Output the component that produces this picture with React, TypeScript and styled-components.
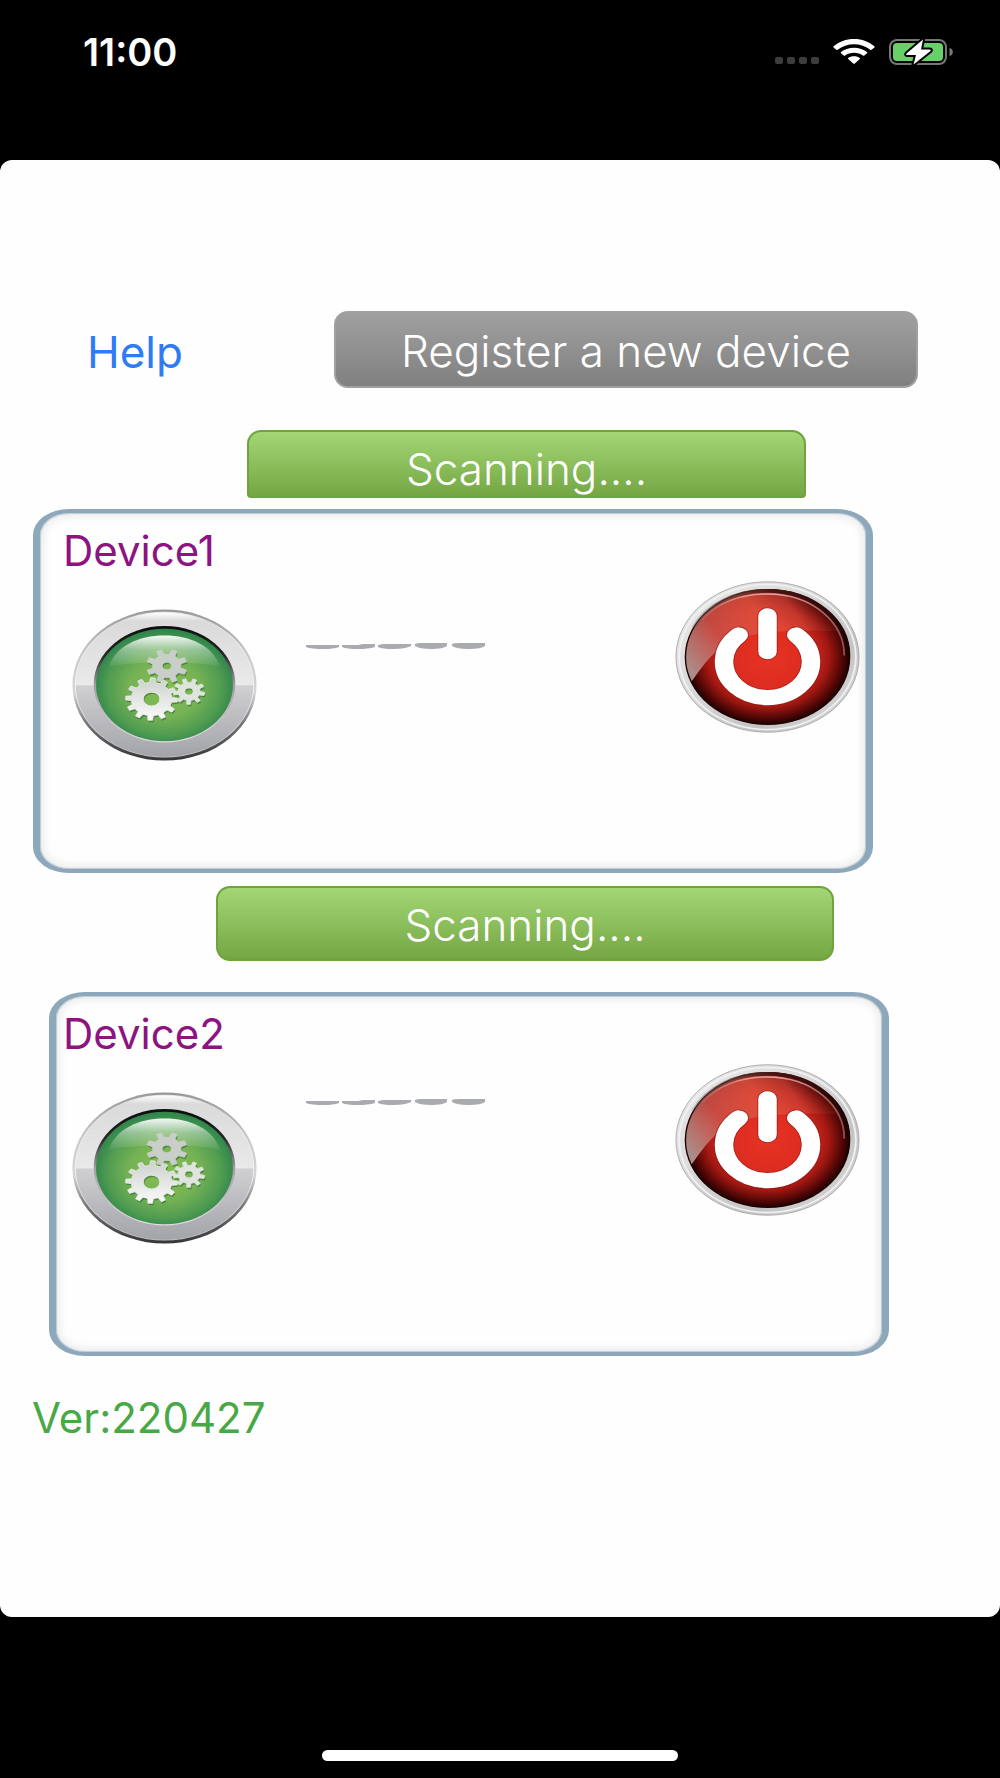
import React from "react";
import styled, { createGlobalStyle } from "styled-components";

const GlobalStyle = createGlobalStyle`
  *, *::before, *::after { box-sizing: border-box; }
  body { margin: 0; background: #000; }
  button { font: inherit; cursor: pointer; }
`;

const Screen = styled.div`
  display: flex;
  flex-direction: column;
  min-height: 100vh;
  background: #000;
  font-family: Inter, "Liberation Sans", sans-serif;
  font-size: 42px;
  line-height: 48px;
`;

const StatusBar = styled.header`
  display: flex;
  justify-content: space-between;
  height: 160px;
  padding: 32px 47px 0 83px;
`;

const Clock = styled.time`
  color: #fff;
  font-size: 38px;
  font-weight: 600;
  line-height: 40px;
`;

const StatusIcons = styled.div`
  display: flex;
  align-items: center;
  gap: 14px;
  height: 40px;
`;

const Sheet = styled.main`
  display: flex;
  flex: 1;
  flex-direction: column;
  padding: 151px 0 40px;
  border-radius: 12px;
  background: #fefefe;
`;

const Toolbar = styled.div`
  display: flex;
  align-items: center;
  padding: 0 82px 0 87px;
`;

const HelpLink = styled.a`
  flex: 0 0 247px;
  padding-top: 4px;
  color: #2f7bf6;
  font-size: 44px;
  text-decoration: none;
`;

const RegisterButton = styled.button`
  flex: 1;
  height: 77px;
  padding: 2px 0 0;
  border: 2px solid #a0a0a0;
  border-radius: 14px;
  background: linear-gradient(#a0a0a0, #808080);
  color: #fff;
  font-size: 44px;
  font-weight: 300;
`;

const ScanButton = styled.button<{ $clipped?: boolean }>`
  height: ${(p) => (p.$clipped ? 68 : 75)}px;
  margin: ${(p) => (p.$clipped ? "42px 194px 11px 247px" : "13px 166px 31px 216px")};
  padding: ${(p) => (p.$clipped ? "10px" : "2px")} 0 0;
  border: 2px solid #6fa43c;
  border-radius: ${(p) => (p.$clipped ? "14px 14px 4px 4px" : "14px")};
  background: linear-gradient(#a3d674, #74a644);
  color: #fff;
  font-size: 44px;
  font-weight: 300;
`;

const Card = styled.section<{ $indented?: boolean }>`
  display: flex;
  align-items: flex-start;
  height: 364px;
  margin: ${(p) => (p.$indented ? "0 111px 0 49px" : "0 127px 0 33px")};
  padding: ${(p) => (p.$indented ? "14px 22px 0 7px" : "14px 6px 0 23px")};
  border: solid #8ca8ba;
  border-width: 4px 7px;
  border-radius: 36px / 26px;
  box-shadow: inset 0 0 1px 1px #b9c9d4, inset 0 0 10px 3px #e9e9e9;
`;

const Identity = styled.div`
  display: flex;
  flex-direction: column;
  align-items: flex-start;
  gap: 34px;
  width: 243px;
`;

const DeviceName = styled.h2`
  margin: 0;
  color: #8c1380;
  font-size: 42px;
  font-weight: 400;
`;

const RoundButton = styled.button<{ $kind: "settings" | "power" }>`
  display: block;
  width: 185px;
  height: 152px;
  margin: ${(p) => (p.$kind === "settings" ? "0 0 0 9px" : "54px 0 0 auto")};
  padding: 0;
  border: 0;
  border-radius: 50%;
  background: none;

  svg { display: block; width: 100%; height: 100%; }
`;

const Reading = styled.div<{ $raised?: boolean }>`
  padding-top: ${(p) => (p.$raised ? 89 : 116)}px;

  svg { display: block; }
`;

const Version = styled.p`
  margin: 38px 0 0 32px;
  color: #48a846;
`;

const HomeArea = styled.footer`
  display: flex;
  align-items: flex-end;
  justify-content: center;
  height: 161px;
  padding-bottom: 17px;
`;

const HomeIndicator = styled.div`
  width: 356px;
  height: 11px;
  border-radius: 6px;
  background: #fff;
`;

/* Outline of a cog with evenly spaced, slightly tapered teeth. */
function cogPath(cx: number, cy: number, outer: number, inner: number, hole: number, teeth: number, turn = 0) {
  const step = (Math.PI * 2) / teeth;
  const at = (r: number, a: number) =>
    `${(cx + r * Math.cos(a)).toFixed(2)} ${(cy + r * Math.sin(a)).toFixed(2)}`;
  let d = "";
  for (let i = 0; i < teeth; i++) {
    const a = turn + i * step;
    d += `${i ? "L" : "M"}${at(inner, a - step * 0.27)}L${at(outer, a - step * 0.17)}`;
    d += `L${at(outer, a + step * 0.17)}L${at(inner, a + step * 0.27)}`;
  }
  return (
    d + `ZM${cx - hole} ${cy}a${hole} ${hole} 0 1 0 ${hole * 2} 0a${hole} ${hole} 0 1 0 ${-hole * 2} 0Z`
  );
}

function GearsArt({ id }: { id: string }) {
  const u = (n: string) => `url(#${id}-${n})`;
  return (
    <svg viewBox="0 0 200 200" preserveAspectRatio="none" aria-hidden="true">
      <defs>
        <linearGradient id={`${id}-edge`} x1="0" y1="0" x2="0" y2="1">
          <stop offset="0" stopColor="#98989c" />
          <stop offset=".3" stopColor="#c9c9cc" />
          <stop offset=".55" stopColor="#d5d5d7" />
          <stop offset=".75" stopColor="#77777a" />
          <stop offset="1" stopColor="#353537" />
        </linearGradient>
        <linearGradient id={`${id}-metal`} x1="0" y1="0" x2="0" y2="1">
          <stop offset="0" stopColor="#fff" />
          <stop offset=".06" stopColor="#dadadb" />
          <stop offset=".5" stopColor="#e9e9ea" />
          <stop offset=".51" stopColor="#d0d0d3" />
          <stop offset="1" stopColor="#a3a4a8" />
        </linearGradient>
        <linearGradient id={`${id}-rim`} x1="0" y1="0" x2="0" y2="1">
          <stop offset="0" stopColor="#0c0d0c" />
          <stop offset=".25" stopColor="#252525" />
          <stop offset=".5" stopColor="#a29ca0" />
          <stop offset="1" stopColor="#e2dce2" />
        </linearGradient>
        <radialGradient id={`${id}-green`} cx=".5" cy=".53" r=".52">
          <stop offset="0" stopColor="#86bf4f" />
          <stop offset=".5" stopColor="#75b254" />
          <stop offset=".8" stopColor="#509c51" />
          <stop offset="1" stopColor="#2f854c" />
        </radialGradient>
        <linearGradient id={`${id}-gloss`} x1="0" y1="0" x2="0" y2="1">
          <stop offset="0" stopColor="#fff" stopOpacity=".95" />
          <stop offset=".45" stopColor="#fff" stopOpacity=".4" />
          <stop offset="1" stopColor="#fff" stopOpacity=".04" />
        </linearGradient>
        <linearGradient id={`${id}-cog`} x1="0" y1="0" x2="0" y2="1">
          <stop offset="0" stopColor="#cdd2cd" />
          <stop offset="1" stopColor="#fafafa" />
        </linearGradient>
      </defs>
      <circle cx="100" cy="100" r="99.500" fill={u("edge")} />
      <ellipse cx="100" cy="99.500" rx="97" ry="96" fill="#fff" opacity=".7" />
      <ellipse cx="100" cy="99.500" rx="96" ry="95" fill={u("metal")} />
      <circle cx="100" cy="99" r="76.500" fill={u("rim")} />
      <circle cx="100" cy="100" r="74" fill={u("green")} />
      <path d="M40 76C47 49 72 35 100 35s53 14 60 41c-30-8-90-8-120 0Z" fill={u("gloss")} />
      <g fillRule="evenodd" strokeLinejoin="round">
        <g fill="#235b2b" opacity=".5" transform="translate(1 2.500)">
          <path d={cogPath(102.5, 75, 22, 15.5, 5, 8, 0.39)} />
          <path d={cogPath(86, 118.5, 28, 22, 9, 12, 0.05)} />
          <path d={cogPath(126.5, 108.5, 17, 12, 4.5, 9, 0.2)} />
        </g>
        <g strokeWidth="1">
          <path d={cogPath(102.5, 75, 22, 15.5, 5, 8, 0.39)} fill="#c9cec9" stroke="#c9cec9" />
          <path d={cogPath(86, 118.5, 28, 22, 9, 12, 0.05)} fill={u("cog")} stroke="#e9ece9" />
          <path d={cogPath(126.5, 108.5, 17, 12, 4.5, 9, 0.2)} fill="#dfe4df" stroke="#dfe4df" />
        </g>
      </g>
    </svg>
  );
}

function PowerArt({ id }: { id: string }) {
  const u = (n: string) => `url(#${id}-${n})`;
  return (
    <svg viewBox="0 0 200 200" preserveAspectRatio="none" aria-hidden="true">
      <defs>
        <linearGradient id={`${id}-metal`} x1="0" y1="0" x2="1" y2="1">
          <stop offset="0" stopColor="#ececec" />
          <stop offset=".35" stopColor="#dcdcdc" />
          <stop offset=".7" stopColor="#c4c4c4" />
          <stop offset="1" stopColor="#dedede" />
        </linearGradient>
        <radialGradient id={`${id}-red`} cx=".5" cy=".5" r=".5">
          <stop offset="0" stopColor="#e63323" />
          <stop offset=".5" stopColor="#dc2b20" />
          <stop offset=".74" stopColor="#a31812" />
          <stop offset=".92" stopColor="#480504" />
          <stop offset="1" stopColor="#170101" />
        </radialGradient>
        <linearGradient id={`${id}-gloss`} x1="0" y1=".7" x2=".9" y2=".3">
          <stop offset="0" stopColor="#b29490" stopOpacity=".95" />
          <stop offset=".3" stopColor="#cf5148" stopOpacity=".88" />
          <stop offset=".6" stopColor="#e4513f" stopOpacity=".85" />
          <stop offset=".8" stopColor="#d04235" stopOpacity=".7" />
          <stop offset="1" stopColor="#6a100c" stopOpacity=".2" />
        </linearGradient>
        <linearGradient id={`${id}-line`} x1="0" y1="0" x2="1" y2="0">
          <stop offset="0" stopColor="#fff" stopOpacity=".1" />
          <stop offset=".5" stopColor="#fcc" stopOpacity=".75" />
          <stop offset="1" stopColor="#fbb" stopOpacity=".4" />
        </linearGradient>
        <linearGradient id={`${id}-shade`} x1="0" y1="0" x2="1" y2="0">
          <stop offset="0" stopColor="#6b5856" stopOpacity=".3" />
          <stop offset=".5" stopColor="#4b1512" />
          <stop offset="1" stopColor="#200303" />
        </linearGradient>
        <clipPath id={`${id}-clip`}>
          <circle cx="100" cy="100" r="88" />
        </clipPath>
      </defs>
      <circle cx="100" cy="100" r="99" fill={u("metal")} stroke="#a2a2a2" strokeWidth="1" />
      <circle cx="100" cy="100" r="95.500" fill="none" stroke="#f1f1f1" strokeWidth="2" />
      <circle cx="100" cy="100" r="89.500" fill={u("red")} />
      <g clipPath={u("clip")}>
        <path d="M8 145C22 132 31 100 58 81C93 62 145 64 192 67V8H8Z" fill={u("gloss")} />
      </g>
      <path d="M20 62C35 30 66 13 100 13C150 13 187 52 187 98" fill="none" stroke={u("shade")} strokeWidth="5" />
      <path d="M29 51C45 29 70 17 100 17C149 17 183 55 183 98" fill="none" stroke={u("line")} strokeWidth="2" />
      <g fill="none" strokeLinecap="round">
        <g stroke="#8f1b14" strokeWidth="22" opacity=".65">
          <path d="M69 71A47 47 0 1 0 131 71" />
          <path d="M100 46V93" />
        </g>
        <g stroke="#fff" strokeWidth="20">
          <path d="M69 71A47 47 0 1 0 131 71" />
          <path d="M100 46V93" />
        </g>
      </g>
    </svg>
  );
}

function DashReading({ raised }: { raised?: boolean }) {
  return (
    <Reading $raised={raised} role="img" aria-label="No reading">
      <svg width="180" height="8" viewBox="0 0 180 8" fill="#aaabaf" aria-hidden="true">
        <path d="M0 2H33V4Q27 6 18 6Q5 6 0 4Z" />
        <path d="M36 2H52L57 1H69V4Q62 6 52 6Q41 6 36 4Z" />
        <path d="M72 2L77 1H105V3Q99 6 88 6Q76 6 72 4Z" />
        <path d="M109 1Q111 0 116 0H141V3Q137 6 126 6Q113 6 109 3Z" />
        <path d="M146 1Q148 0 153 0H179V3Q175 6 163 6Q150 6 146 3Z" />
      </svg>
    </Reading>
  );
}

function SignalDots() {
  return (
    <svg width="44" height="26" viewBox="0 0 44 26" fill="#3d3d3d" aria-hidden="true">
      {[0, 12, 24, 36].map((x) => (
        <rect key={x} x={x} y="18" width="8" height="7" rx="2" />
      ))}
    </svg>
  );
}

function WifiIcon() {
  return (
    <svg width="42" height="26" viewBox="0 0 42 26" fill="#fff" role="img" aria-label="Wi-Fi">
      <path d="M21 0C13 0 6 2.700.6 7.300Q0 8 .6 8.500L3.400 10.800Q4 11.200 4.700 10.700C9 7.200 15 5.200 21 5.200s12 2 16.300 5.500q.7.5 1.300.1l2.800-2.300q.6-.5 0-1.200C36 2.700 29 0 21 0Z" />
      <path d="M21 8.700c-5 0-9.600 1.600-13 4.300q-.7.600 0 1.200l2.700 2.300q.7.500 1.400 0c2.400-1.800 5.500-2.800 8.900-2.800s6.500 1 8.900 2.800q.7.500 1.400 0l2.700-2.300q.7-.6 0-1.200c-3.400-2.700-8-4.300-13-4.300Z" />
      <path d="M21 17.200c-2.300 0-4.300.6-5.800 1.700q-.7.600 0 1.200l5 4.500q.8.700 1.600 0l5-4.500q.7-.6 0-1.200c-1.500-1.100-3.500-1.700-5.800-1.700Z" />
    </svg>
  );
}

function BatteryIcon() {
  return (
    <svg width="64" height="28" viewBox="0 0 64 28" role="img" aria-label="Battery charging">
      <rect x="1" y="2" width="56" height="24" rx="7" fill="none" stroke="#777" strokeWidth="2" />
      <path d="M60.500 10c4.500 1 4.500 7 0 8Z" fill="#777" />
      <rect x="4" y="5" width="50" height="18" rx="4" fill="#66d169" />
      <path
        d="M34 1.500L17.500 15.500Q16.500 17 18.500 17H27L24.500 26.500L41.500 13Q42.500 11.500 40.500 11.500H32Z"
        fill="#fff"
        stroke="#000"
        strokeWidth="4"
        strokeLinejoin="round"
        paintOrder="stroke"
      />
    </svg>
  );
}

interface DeviceProps {
  id: string;
  name: string;
  indented?: boolean;
}

function DeviceCard({ id, name, indented }: DeviceProps) {
  return (
    <Card $indented={indented} aria-label={name}>
      <Identity>
        <DeviceName>{name}</DeviceName>
        <RoundButton type="button" $kind="settings" aria-label={`${name} settings`}>
          <GearsArt id={`${id}-gears`} />
        </RoundButton>
      </Identity>
      <DashReading raised={indented} />
      <RoundButton type="button" $kind="power" aria-label={`${name} power`}>
        <PowerArt id={`${id}-power`} />
      </RoundButton>
    </Card>
  );
}

export default function App() {
  return (
    <Screen>
      <GlobalStyle />
      <StatusBar>
        <Clock>11:00</Clock>
        <StatusIcons>
          <SignalDots />
          <WifiIcon />
          <BatteryIcon />
        </StatusIcons>
      </StatusBar>
      <Sheet>
        <Toolbar>
          <HelpLink href="#help">Help</HelpLink>
          <RegisterButton type="button">Register a new device</RegisterButton>
        </Toolbar>
        <ScanButton type="button" $clipped>Scanning....</ScanButton>
        <DeviceCard id="device1" name="Device1" />
        <ScanButton type="button">Scanning....</ScanButton>
        <DeviceCard id="device2" name="Device2" indented />
        <Version>Ver:220427</Version>
      </Sheet>
      <HomeArea>
        <HomeIndicator />
      </HomeArea>
    </Screen>
  );
}
